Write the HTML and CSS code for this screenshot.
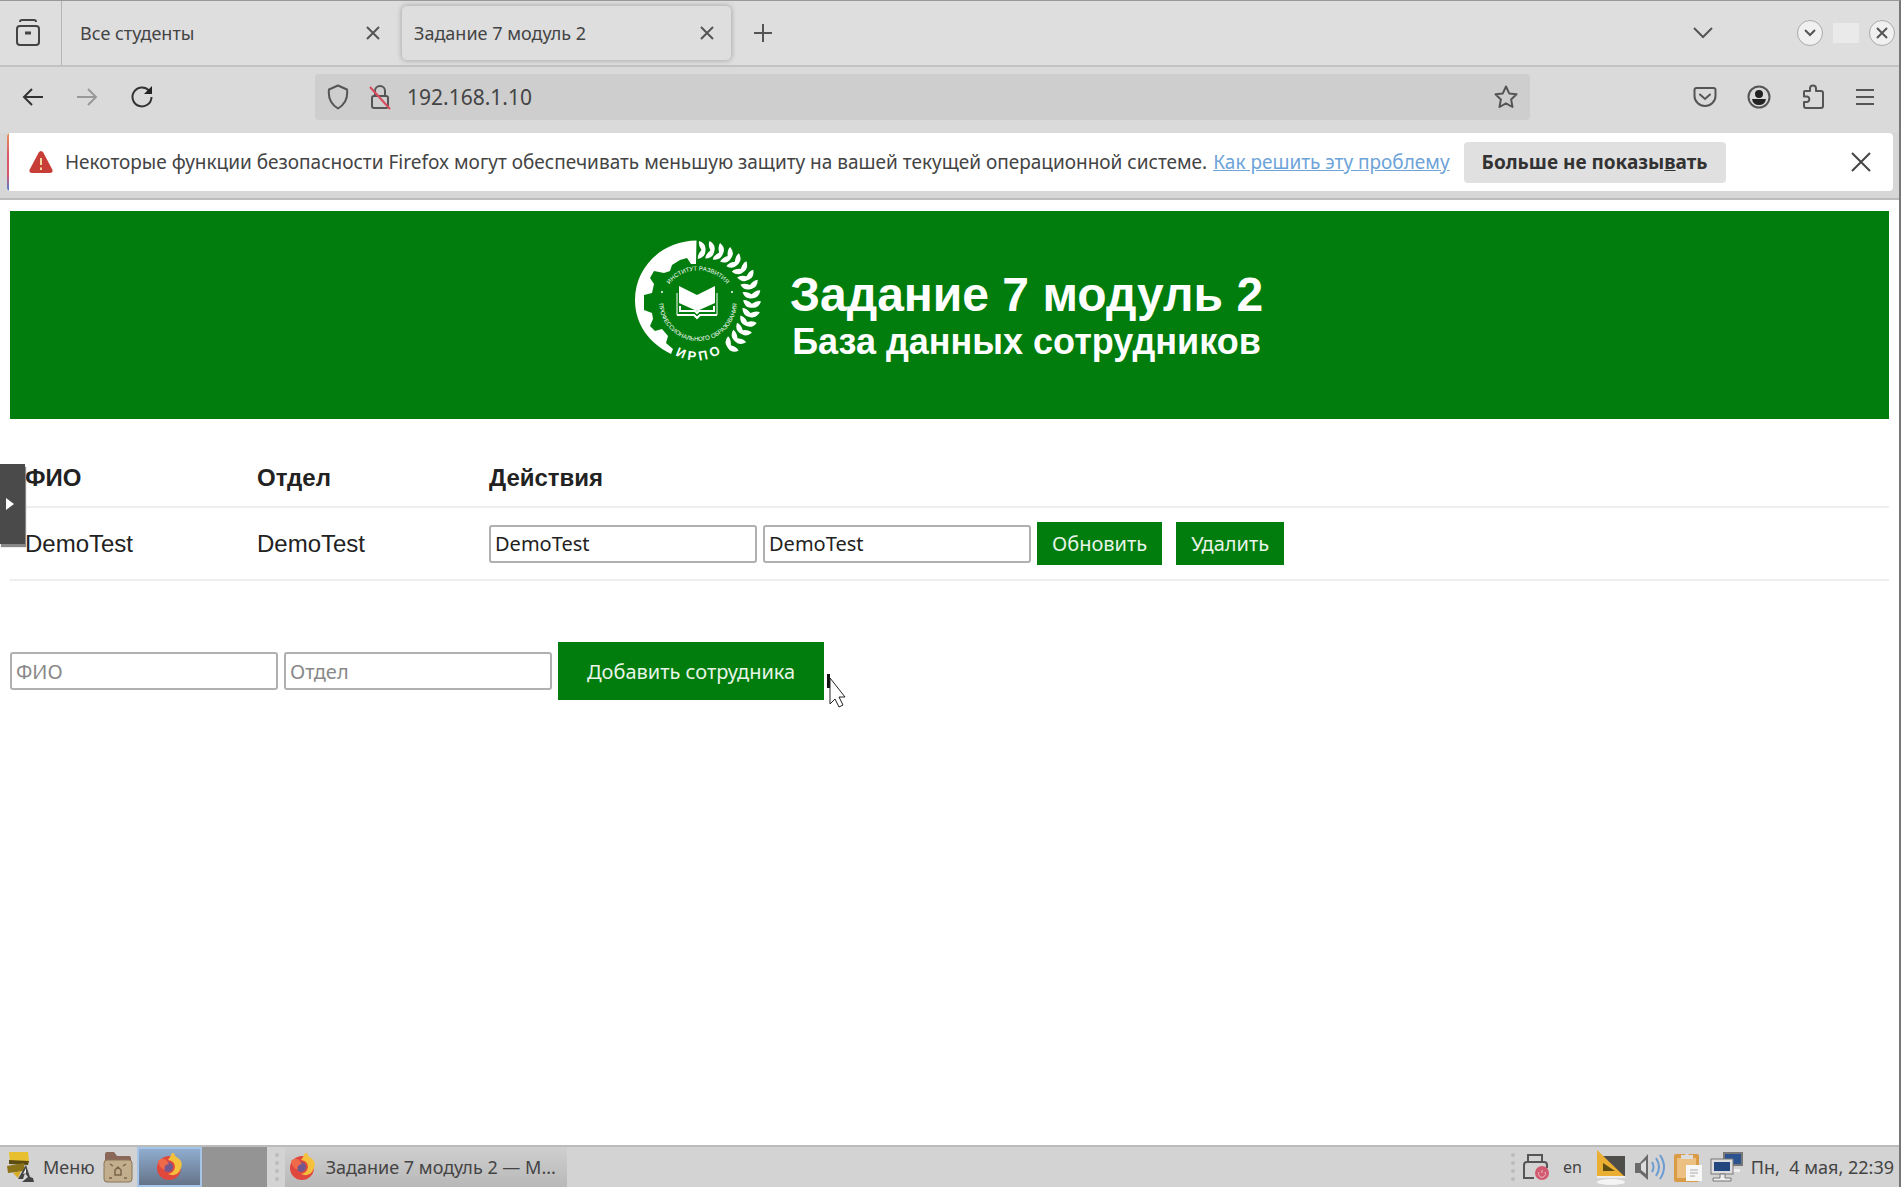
FILE: index.html
```html
<!DOCTYPE html>
<html lang="ru">
<head>
    <meta charset="UTF-8">
    <meta name="viewport" content="width=device-width, initial-scale=1.0">
    <title>Задание 7 модуль 2</title>
    <link rel="stylesheet" href="styles.css">
</head>
<body>
    <div class="desktop">
        <!-- Вкладки -->
        <div class="tab-bar">
            <button class="view-button" aria-label="Обзор">
                <svg width="26" height="28" viewBox="0 0 26 28" fill="none" stroke="#444" stroke-width="2"><path d="M5 3q0-2 2-2h12q2 0 2 2"/><rect x="2" y="7" width="22" height="19" rx="3"/><path d="M10 14h6" stroke-width="3"/></svg>
            </button>
            <div class="tab">
                <span class="tab-title">Все студенты</span>
                <button class="icon-button" aria-label="Закрыть вкладку"><svg width="14" height="14" viewBox="0 0 14 14" stroke="#555" stroke-width="2"><path d="M1 1l12 12M13 1L1 13"/></svg></button>
            </div>
            <div class="tab tab-active">
                <span class="tab-title">Задание 7 модуль 2</span>
                <button class="icon-button" aria-label="Закрыть вкладку"><svg width="14" height="14" viewBox="0 0 14 14" stroke="#555" stroke-width="2"><path d="M1 1l12 12M13 1L1 13"/></svg></button>
            </div>
            <button class="icon-button new-tab" aria-label="Новая вкладка"><svg width="18" height="18" viewBox="0 0 18 18" stroke="#555" stroke-width="2"><path d="M9 0v18M0 9h18"/></svg></button>
            <div class="window-controls">
                <button class="icon-button all-tabs" aria-label="Список вкладок"><svg width="20" height="12" viewBox="0 0 20 12" fill="none" stroke="#555" stroke-width="2"><path d="M1 1l9 9 9-9"/></svg></button>
                <button class="round-button" aria-label="Свернуть"><svg width="12" height="8" viewBox="0 0 12 8" fill="none" stroke="#555" stroke-width="2"><path d="M1 1l5 5 5-5"/></svg></button>
                <span class="blank-button"></span>
                <button class="round-button" aria-label="Закрыть"><svg width="12" height="12" viewBox="0 0 12 12" stroke="#555" stroke-width="2"><path d="M1 1l10 10M11 1L1 11"/></svg></button>
            </div>
        </div>

        <!-- Панель навигации -->
        <div class="nav-bar">
            <div class="nav-buttons">
                <button class="icon-button" aria-label="Назад"><svg width="22" height="20" viewBox="0 0 22 20" fill="none" stroke="#333" stroke-width="2"><path d="M10 2l-8 8 8 8M2 10h19"/></svg></button>
                <button class="icon-button" aria-label="Вперёд"><svg width="22" height="20" viewBox="0 0 22 20" fill="none" stroke="#999" stroke-width="2"><path d="M12 2l8 8-8 8M20 10H1"/></svg></button>
                <button class="icon-button" aria-label="Обновить страницу"><svg width="24" height="24" viewBox="0 0 24 24" fill="none" stroke="#333" stroke-width="2"><path d="M19 5.500A9.500 9.500 0 1 0 21.500 12"/><path d="M22 1v8h-8z" fill="#222" stroke="none"/></svg></button>
            </div>
            <div class="url-bar">
                <svg width="22" height="26" viewBox="0 0 22 26" fill="none" stroke="#555" stroke-width="2" stroke-linejoin="round"><path d="M11 1.500l9 4c1 8-2 15-9 19C4 20.500 1 13.500 2 5.500z"/></svg>
                <svg width="22" height="26" viewBox="0 0 22 26" fill="none" stroke="#555" stroke-width="2"><path d="M6 12V7a5 5 0 0 1 10 0v5"/><rect x="3" y="12" width="16" height="12" rx="2"/><path d="M1 3l20 22" stroke="#d84a5c"/></svg>
                <input class="url-input" type="text" value="192.168.1.10" aria-label="Адрес">
                <button class="icon-button" aria-label="В закладки"><svg width="24" height="24" viewBox="0 0 24 24" fill="none" stroke="#555" stroke-width="2" stroke-linejoin="round"><path d="M12 1.500l3.200 6.900 7.300.900-5.400 5.100 1.400 7.600L12 18.300 5.500 22l1.400-7.600L1.500 9.300l7.300-.900z"/></svg></button>
            </div>
            <div class="nav-tools">
                <button class="icon-button" aria-label="Pocket"><svg width="24" height="22" viewBox="0 0 24 22" fill="none" stroke="#555" stroke-width="2" stroke-linecap="round"><path d="M3.500 2h17q2 0 2 2v6a10.500 10 0 0 1-21 0V4q0-2 2-2z"/><path d="M7 8.500l5 4.500 5-4.500"/></svg></button>
                <button class="icon-button" aria-label="Аккаунт"><svg width="24" height="24" viewBox="0 0 24 24" fill="#222"><circle cx="12" cy="12" r="10.500" fill="none" stroke="#555" stroke-width="2"/><circle cx="12" cy="9" r="4"/><path d="M5 14h14q-1 6-7 6t-7-6z"/></svg></button>
                <button class="icon-button" aria-label="Расширения"><svg width="24" height="26" viewBox="0 0 24 26" fill="none" stroke="#555" stroke-width="2" stroke-linejoin="round"><path d="M3 8q0-1 1-1h5V4.500a2.800 2.800 0 0 1 6 0V7h5q2 0 2 2v13q0 2-2 2H5q-2 0-2-2v-4h3a2.800 2.800 0 0 0 0-5.500H3z"/></svg></button>
                <button class="icon-button" aria-label="Меню браузера"><svg width="20" height="18" viewBox="0 0 20 18" stroke="#555" stroke-width="2"><path d="M1 2h18M1 9h18M1 16h18"/></svg></button>
            </div>
        </div>

        <!-- Предупреждение -->
        <div class="notice-wrap">
            <div class="notice">
                <svg width="24" height="22" viewBox="0 0 24 22"><path d="M12 0q1.500 0 2.300 1.500l9 17Q24.500 22 21 22H3Q-.500 22 .700 18.500l9-17Q10.500 0 12 0z" fill="#c73e38"/><path d="M12 7v7M12 16.500v2.500" stroke="#f4d9a0" stroke-width="2"/></svg>
                <span class="notice-text">Некоторые функции безопасности Firefox могут обеспечивать меньшую защиту на вашей текущей операционной системе.</span>
                <a class="notice-link" href="#">Как решить эту проблему</a>
                <button class="notice-button">Больше не показы<u>в</u>ать</button>
                <button class="icon-button notice-close" aria-label="Закрыть сообщение"><svg width="20" height="20" viewBox="0 0 20 20" stroke="#444" stroke-width="2"><path d="M1 1l18 18M19 1L1 19"/></svg></button>
            </div>
        </div>

        <!-- Страница -->
        <main class="page">
            <header class="page-header">
                <svg class="logo" width="128" height="124" viewBox="9 8 128 124" fill="#fff">
                    <defs>
                        <path id="leaf" d="M-3-9Q4-7 4-1V1Q4 7-3 9Q-4 5 0 0Q-4-5-3-9z"/>
                        <path id="arc-top" d="M39 63A36 35 0 0 1 107 63"/>
                        <path id="arc-bottom" d="M34 70A39 40 0 0 0 112 70"/>
                        <path id="arc-name" d="M50 124Q73 136 96 122"/>
                    </defs>
                    <path d="M71.500 9.500C37 10 10 36 10 69c0 24 14 43 36 54l2-5-7-6 2-7-6-7-7 2-5-5 3-7-1-6-8-3 0-15 8-2 2-9-4-6 4-7 10 2 6-2 2-6 8-5 7-2 4 6 5 0z"/>
                    <g transform="translate(73 69)">
                        <use href="#leaf" transform="rotate(4) translate(0 -50)"/>
                        <use href="#leaf" transform="rotate(14) translate(0 -51)"/>
                        <use href="#leaf" transform="rotate(24) translate(0 -52)"/>
                        <use href="#leaf" transform="rotate(34) translate(0 -53)"/>
                        <use href="#leaf" transform="rotate(44) translate(0 -53)"/>
                        <use href="#leaf" transform="rotate(54) translate(0 -53)"/>
                        <use href="#leaf" transform="rotate(64) translate(0 -54)"/>
                        <use href="#leaf" transform="rotate(74) translate(0 -54)"/>
                        <use href="#leaf" transform="rotate(84) translate(0 -54)"/>
                        <use href="#leaf" transform="rotate(94) translate(0 -54)"/>
                        <use href="#leaf" transform="rotate(104) translate(0 -54)"/>
                        <use href="#leaf" transform="rotate(114) translate(0 -54)"/>
                        <use href="#leaf" transform="rotate(124) translate(0 -54)"/>
                        <use href="#leaf" transform="rotate(134) translate(0 -55)"/>
                        <use href="#leaf" transform="rotate(144) translate(0 -56)"/>
                    </g>
                    <path d="M54 55l18 9 18-9v17l-18 8-18-8z"/>
                    <path d="M52 62v22h18l2 2 2-2h18V62" fill="none" stroke="#fff" stroke-width="1"/>
                    <path d="M55 75v5h15l2 2 2-2h15v-5M52 84h17l3 3 3-3h17" fill="none" stroke="#fff" stroke-width="2"/>
                    <circle cx="37" cy="61" r="1"/><circle cx="107" cy="61" r="1"/>
                    <text class="logo-small"><textPath href="#arc-top" startOffset="50%">ИНСТИТУТ РАЗВИТИЯ</textPath></text>
                    <text class="logo-small"><textPath href="#arc-bottom" startOffset="50%">ПРОФЕССИОНАЛЬНОГО ОБРАЗОВАНИЯ</textPath></text>
                    <text class="logo-name"><textPath href="#arc-name" startOffset="50%">И Р П О</textPath></text>
                </svg>
                <div class="titles">
                    <h1>Задание 7 модуль 2</h1>
                    <h2>База данных сотрудников</h2>
                </div>
            </header>

            <table class="staff">
                <thead>
                    <tr><th>ФИО</th><th>Отдел</th><th>Действия</th></tr>
                </thead>
                <tbody>
                    <tr>
                        <td>DemoTest</td>
                        <td>DemoTest</td>
                        <td>
                            <form class="row-form">
                                <input class="field" type="text" value="DemoTest" aria-label="ФИО">
                                <input class="field" type="text" value="DemoTest" aria-label="Отдел">
                                <button class="btn" type="button">Обновить</button>
                                <button class="btn btn-delete" type="button">Удалить</button>
                            </form>
                        </td>
                    </tr>
                </tbody>
            </table>

            <form class="row-form add-form">
                <input class="field" type="text" placeholder="ФИО" aria-label="ФИО">
                <input class="field" type="text" placeholder="Отдел" aria-label="Отдел">
                <button class="btn btn-add" type="button">Добавить сотрудника</button>
                <svg class="cursor" width="20" height="34" viewBox="0 0 20 34"><path d="M0 0h3v14H0z" fill="#111"/><path d="M3 4v26l5-5 4 8 4-2-4-8h6z" fill="#fff" stroke="#222" stroke-width="1"/></svg>
            </form>
        </main>

        <button class="side-handle" aria-label="Открыть панель"><svg width="10" height="12" viewBox="0 0 10 12"><path d="M1 0l8 6-8 6z" fill="#fff"/></svg></button>

        <!-- Панель задач -->
        <footer class="taskbar">
            <button class="menu-button">
                <svg width="30" height="32" viewBox="0 0 30 32"><path d="M4 1h19l1 9-3 2H5z" fill="#e8bf2e"/><path d="M4 9l20 1-1 4-19-1z" fill="#5c4c12"/><path d="M2 15l17-3 1 8-17 2z" fill="#8a7318"/><path d="M8 22l8-2-3 7z" fill="#d8aa20"/><path d="M21 14l-8 14h5l2-6 3 4-6 5h12l-1-4-3-1z" fill="#444"/><path d="M21 17l-3 6 3-1z" fill="#eee"/></svg>
                <span>Меню</span>
            </button>
            <button class="icon-button" aria-label="Файлы"><svg width="30" height="32" viewBox="0 0 30 32"><path d="M2 3q0-2 2-2h7l3 4h12q2 0 2 2v9H2z" fill="#8b675a"/><rect x="1" y="9" width="28" height="22" rx="3" fill="#c2ad8c" stroke="#8a7658" stroke-width="1"/><path d="M12 24v-5l3-3 3 3v5zM7 13l3 2M20 15l3-2M6 27h3M21 27h3" fill="none" stroke="#7b6549" stroke-width="1.500"/></svg></button>
            <div class="workspaces">
                <button class="workspace workspace-active" aria-label="Рабочее место 1">
                    <svg width="28" height="28" viewBox="0 0 28 28"><circle cx="14" cy="15" r="12" fill="#e0483e"/><path d="M17 0q-2 5-4 7 7 1 7 7-1 6-7 7 7 3 11-2 6-9-1-14-3-1-4-5z" fill="#f5c13c"/><circle cx="13" cy="14" r="5" fill="#73588f"/><path d="M3 8q4-4 8-1l3 4q-6 1-4 6-6-2-7-9z" fill="#ef6a48"/></svg>
                </button>
                <button class="workspace" aria-label="Рабочее место 2"></button>
            </div>
            <span class="grip"></span>
            <button class="task">
                <svg width="28" height="28" viewBox="0 0 28 28"><circle cx="14" cy="15" r="12" fill="#e0483e"/><path d="M17 0q-2 5-4 7 7 1 7 7-1 6-7 7 7 3 11-2 6-9-1-14-3-1-4-5z" fill="#f5c13c"/><circle cx="13" cy="14" r="5" fill="#73588f"/><path d="M3 8q4-4 8-1l3 4q-6 1-4 6-6-2-7-9z" fill="#ef6a48"/></svg>
                <span>Задание 7 модуль 2 — М...</span>
            </button>
            <div class="tray">
                <span class="grip"></span>
                <svg width="28" height="28" viewBox="0 0 28 28" fill="none" stroke="#555" stroke-width="2"><path d="M6 8V2h14v6M12 25H2V12q0-3 3-3h17q3 0 3 3v3"/><circle cx="20" cy="20" r="6" fill="#d05a70" stroke="#d05a70"/><path d="M20 17v3M17 19a3.500 3.500 0 1 0 6 0" stroke="#f0b8c0" stroke-width="1"/></svg>
                <span class="lang">en</span>
                <svg width="32" height="36" viewBox="0 0 32 36"><rect x="2" y="7" width="28" height="20" fill="#4f4d49"/><path d="M2 27h28v2H2z" fill="#eee"/><path d="M2 1l27 26H2z" fill="#e9ae32"/><path d="M8 14l12 8H8z" fill="#5c4c12"/><ellipse cx="16" cy="33" rx="14" ry="3" fill="#f4f4f4"/></svg>
                <svg width="32" height="28" viewBox="0 0 32 28" fill="none"><path d="M1 10h5l8-9v26l-8-7H1z" fill="#6a6a6a"/><path d="M7 11l5-4v14l-5-4z" fill="#ddd"/><path d="M18 9q3 5 0 10M22 5q6 9 0 18M26 2q8 12 0 24" stroke="#6b9bd0" stroke-width="2"/></svg>
                <svg width="30" height="32" viewBox="0 0 30 32"><rect x="1" y="3" width="25" height="28" rx="2" fill="#d99b45"/><rect x="4" y="7" width="19" height="20" fill="#ecc081"/><path d="M8 8V4h4q1-3 4 0h4v4z" fill="#ddd"/><rect x="13" y="14" width="16" height="16" fill="#f7f7f7"/><path d="M17 19h8M17 22h8M17 25h5" stroke="#aaa"/></svg>
                <svg width="34" height="32" viewBox="0 0 34 32"><rect x="13" y="1" width="20" height="14" fill="#777"/><rect x="15" y="3" width="16" height="10" fill="#2d5290"/><path d="M18 18h12v3H18z" fill="#eee"/><rect x="1" y="8" width="22" height="15" fill="#ddd" stroke="#777"/><rect x="4" y="11" width="16" height="9" fill="#23477f"/><path d="M10 23h5v4h6v3H3v-3h7z" fill="#eee" stroke="#777"/></svg>
                <span class="clock">Пн,&nbsp; 4 мая, 22:39</span>
            </div>
        </footer>
    </div>
</body>
</html>
```
FILE: styles.css
```css
* {
    box-sizing: border-box;
}
body {
    margin: 0;
    font-family: "Noto Sans", sans-serif;
    font-size: 18px;
    color: #444;
    background-color: #fff;
}
button, input {
    font-family: inherit;
    font-size: inherit;
    color: inherit;
}
svg {
    display: block;
    flex-shrink: 0;
}
.desktop {
    position: relative;
    display: flex;
    flex-direction: column;
    min-height: 100vh;
    border-top: 1px solid #999;
    border-right: 2px solid #777;
}
.icon-button {
    display: flex;
    align-items: center;
    justify-content: center;
    padding: 0;
    border: none;
    background: none;
}

/* вкладки */
.tab-bar {
    display: flex;
    align-items: center;
    height: 66px;
    background-color: #dedede;
    border-bottom: 2px solid #c2c2c2;
}
.view-button {
    display: flex;
    align-items: center;
    justify-content: center;
    width: 62px;
    height: 100%;
    padding: 0 6px 0 0;
    border: none;
    border-right: 1px solid #b5b5b5;
    background: none;
}
.tab {
    display: flex;
    align-items: center;
    justify-content: space-between;
    width: 331px;
    height: 56px;
    padding: 0 17px 0 14px;
    margin-right: 4px;
    border-radius: 6px;
}
.tab-active {
    padding-left: 12px;
    border: 1px solid #c4c4c4;
    box-shadow: 0 0 4px #aaa;
}
.tab:first-of-type {
    margin-left: 4px;
}
.new-tab {
    margin-left: 18px;
}
.window-controls {
    display: flex;
    align-items: center;
    gap: 10px;
    margin-left: auto;
    padding-right: 4px;
}
.all-tabs {
    margin-right: 74px;
}
.round-button {
    display: flex;
    align-items: center;
    justify-content: center;
    width: 26px;
    height: 26px;
    padding: 0;
    border: 1px solid #aaa;
    border-radius: 50%;
    background-color: #f0f0f0;
}
.blank-button {
    width: 26px;
    height: 20px;
    background-color: #eaeaea;
}

/* навигация */
.nav-bar {
    display: flex;
    align-items: center;
    height: 66px;
    padding: 0 24px 6px 22px;
    background-color: #dadada;
}
.nav-buttons {
    display: flex;
    align-items: center;
    gap: 32px;
    width: 293px;
}
.url-bar {
    display: flex;
    align-items: center;
    gap: 20px;
    flex: 1;
    height: 46px;
    padding: 0 12px;
    background-color: #cecece;
    border-radius: 4px;
}
.url-input {
    flex: 1;
    min-width: 0;
    margin-left: -4px;
    padding: 0;
    border: none;
    background: none;
    font-size: 21px;
}
.nav-tools {
    display: flex;
    align-items: center;
    justify-content: flex-end;
    gap: 30px;
    width: 345px;
}

/* предупреждение */
.notice-wrap {
    padding: 0 6px 7px 7px;
    background-color: #d6d6d6;
    border-bottom: 2px solid #bbb;
}
.notice {
    display: flex;
    align-items: center;
    height: 58px;
    padding: 0 22px;
    background: linear-gradient(#e8935a, #d9566b 40%, #d9566b 70%, #4a7fd0) left / 2px 100% no-repeat #fff;
    border-radius: 4px;
    font-size: 19px;
}
.notice-text {
    margin-left: 12px;
    white-space: nowrap;
}
.notice-link {
    margin-left: 6px;
    color: #6da3d8;
    white-space: nowrap;
}
.notice-button {
    height: 41px;
    margin-left: 14px;
    padding: 0 18px;
    border: none;
    border-radius: 4px;
    background-color: #e0e0e0;
    color: #333;
    font-weight: bold;
    white-space: nowrap;
}
.notice-close {
    margin-left: auto;
}

/* страница */
.page {
    flex: 1;
    padding: 11px 10px;
    font-family: "Liberation Sans", Arial, sans-serif;
    font-size: 24px;
    color: #222;
}
.page-header {
    display: flex;
    justify-content: center;
    gap: 28px;
    height: 208px;
    padding: 28px 2px 0 0;
    background-color: #007d0c;
    color: #fff;
}
.logo-small {
    font-size: 6px;
    text-anchor: middle;
}
.logo-name {
    font-size: 13px;
    font-weight: bold;
    text-anchor: middle;
}
.titles {
    padding-top: 30px;
    text-align: center;
}
.titles h1, .titles h2 {
    margin: 0;
}
.titles h1 {
    font-size: 48px;
    line-height: 52px;
}
.titles h2 {
    font-size: 36px;
    line-height: 42px;
}
.staff {
    width: 100%;
    margin-top: 31px;
    border-collapse: collapse;
}
.staff th, .staff td {
    padding: 14px 15px;
    border-bottom: 2px solid #eee;
    text-align: left;
}
.staff th:first-child, .staff th:nth-child(2) {
    width: 232px;
}
.row-form {
    display: flex;
    align-items: center;
    gap: 6px;
}
.field {
    width: 268px;
    height: 38px;
    padding: 0 4px;
    border: 2px solid #b0b0b0;
    border-radius: 3px;
    background-color: #fff;
    font-family: "Noto Sans", sans-serif;
    font-size: 20px;
}
.field::placeholder {
    color: #888;
}
.btn {
    height: 43px;
    padding: 0 15px;
    border: none;
    background-color: #007d0c;
    color: #e8f5e8;
    font-family: "Noto Sans", sans-serif;
    font-size: 20px;
}
.btn-delete {
    margin-left: 8px;
}
.add-form {
    position: relative;
    margin-top: 61px;
}
.btn-add {
    height: 58px;
    padding: 0 29px;
}
.cursor {
    position: absolute;
    left: 817px;
    top: 32px;
}
.side-handle {
    position: absolute;
    left: 0;
    top: 463px;
    width: 25px;
    height: 80px;
    padding: 0 0 0 5px;
    border: none;
    background-color: #4a4a4a;
    box-shadow: 1px 3px 1px #888;
}

/* панель задач */
.taskbar {
    display: flex;
    align-items: center;
    height: 42px;
    background-color: #d3d3d3;
    border-top: 2px solid #bbb;
}
.menu-button {
    display: flex;
    align-items: center;
    gap: 8px;
    padding: 0 8px 0 5px;
    border: none;
    background: none;
}
.workspaces {
    display: flex;
    height: 100%;
    margin-left: 4px;
}
.workspace {
    width: 65px;
    padding: 0;
    border: none;
    background-color: #949494;
}
.workspace-active {
    display: flex;
    align-items: center;
    justify-content: center;
    border: 2px solid #a4c4e8;
    background: linear-gradient(#8faccf, #647488);
}
.grip {
    width: 4px;
    height: 28px;
    margin: 0 6px 0 8px;
    border-left: 4px dotted #bbb;
}
.task {
    display: flex;
    align-items: center;
    gap: 10px;
    width: 282px;
    height: 100%;
    padding: 0 3px;
    border: none;
    background: linear-gradient(#cfcfcf, #b8b8b8);
    white-space: nowrap;
}
.tray {
    display: flex;
    align-items: center;
    gap: 7px;
    margin-left: auto;
    padding-right: 5px;
}
.tray .grip {
    margin: 0;
}
.lang {
    margin: 0 6px;
    font-size: 16px;
}
.clock {
    white-space: nowrap;
}
```
